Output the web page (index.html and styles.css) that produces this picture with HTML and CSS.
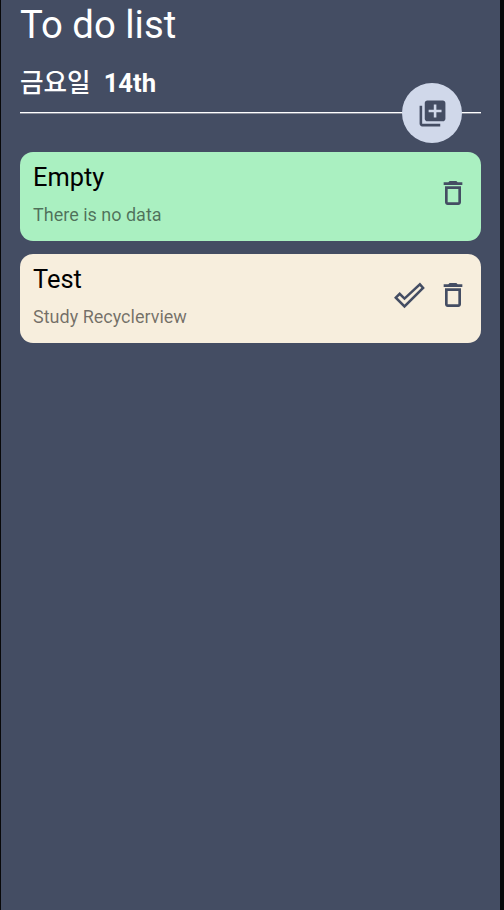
FILE: index.html
```html
<!DOCTYPE html>
<html lang="ko">
<head>
<meta charset="utf-8">
<title>To do list</title>
<link rel="stylesheet" href="styles.css">
</head>
<body>
<main class="screen">
  <header class="header">
    <h1 class="title">To do list</h1>
    <p class="date"><span class="weekday">금요일</span><span>14th</span></p>
    <button class="add" aria-label="Add">
      <svg viewBox="0 0 24 24" width="31" height="31"><path d="M4 6H2v14c0 1.1.9 2 2 2h14v-2H4V6zm16-4H8c-1.1 0-2 .9-2 2v12c0 1.1.9 2 2 2h12c1.1 0 2-.9 2-2V4c0-1.1-.9-2-2-2zm-1 9h-4v4h-2v-4H9V9h4V5h2v4h4v2z"/></svg>
    </button>
  </header>
  <ul class="list">
    <li class="card done">
      <div class="text">
        <h2 class="name">Empty</h2>
        <p class="note">There is no data</p>
      </div>
      <svg class="trash" viewBox="0 0 24 24"><path d="M16 9v10H8V9h8m-1.5-6h-5l-1 1H5v2h14V4h-3.5l-1-1zM18 7H6v12c0 1.1.9 2 2 2h8c1.1 0 2-.9 2-2V7z"/></svg>
    </li>
    <li class="card">
      <div class="text">
        <h2 class="name">Test</h2>
        <p class="note">Study Recyclerview</p>
      </div>
      <svg class="check" viewBox="0 0 32 28"><path d="M2.8 15.7 6.7 11.8 11.5 16.6 26.9 2.3 30.1 5.9 11.5 24.5Z"/></svg>
      <svg class="trash" viewBox="0 0 24 24"><path d="M16 9v10H8V9h8m-1.5-6h-5l-1 1H5v2h14V4h-3.5l-1-1zM18 7H6v12c0 1.1.9 2 2 2h8c1.1 0 2-.9 2-2V7z"/></svg>
    </li>
  </ul>
</main>
</body>
</html>
```
FILE: styles.css
```css
* {
  box-sizing: border-box;
  margin: 0;
  padding: 0;
}

body {
  background: #080809;
  font-family: Roboto, "Noto Sans CJK KR", sans-serif;
}

.screen {
  height: 910px;
  margin: 0 4px 0 1px;
  padding: 0 19px;
  background: #444d63;
}

.header {
  position: relative;
  height: 113px;
  border-bottom: 1px solid #fff;
  box-shadow: 0 1px #8b8f9c;
  color: #fff;
}

.title {
  height: 48px;
  font-size: 38.3px;
  font-weight: 400;
  line-height: 49px;
}

.date {
  display: flex;
  gap: 13px;
  padding-top: 19px;
  font-size: 25.6px;
  font-weight: 700;
  line-height: 32px;
}

.weekday {
  font-weight: 500;
}

.add {
  position: absolute;
  right: 19px;
  bottom: -31px;
  display: grid;
  place-items: center;
  width: 60px;
  height: 60px;
  border: 0;
  border-radius: 50%;
  background: #d0d8ea;
}

svg {
  display: block;
  fill: #444d63;
}

.list {
  display: grid;
  gap: 13px;
  padding-top: 39px;
  list-style: none;
}

.card {
  display: flex;
  align-items: center;
  height: 89px;
  padding: 0 12px 7px 13px;
  border-radius: 13px;
  background: #f7eedd;
}

.done {
  background: #aaf0c1;
}

.text {
  flex: 1;
}

.name {
  color: #000;
  font-size: 25.4px;
  font-weight: 400;
  line-height: 35px;
}

.note {
  padding-top: 8px;
  color: rgba(0, 0, 0, 0.54);
  font-size: 18px;
  line-height: 24px;
}

.trash {
  width: 32px;
  height: 32px;
}

.check {
  width: 32px;
  height: 28px;
  margin: 1px 12px 0 0;
  fill: none;
  stroke: #444d63;
  stroke-width: 2.5;
}
```
